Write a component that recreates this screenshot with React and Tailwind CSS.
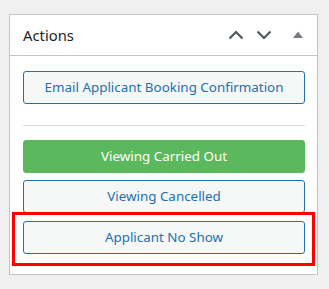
import React from 'react';

const font = { fontFamily: '"Noto Sans", "Open Sans", sans-serif' };

const ActionButton = ({ children, primary, className = '' }) => (
  <button
    className={
      'flex h-[33px] w-full items-center justify-center rounded-[3px] border text-[13.4px] ' +
      (primary
        ? 'border-[#5cb85c] bg-[#5cb85c] text-white '
        : 'border-[#2271b1] bg-[#f6f7f7] text-[#2271b1] ') +
      className
    }
  >
    {children}
  </button>
);

export default function App() {
  return (
    <div className="min-h-screen bg-[#f0f0f1] pl-[9px] pt-[14px]" style={font}>
      <div className="relative w-[309px] border border-[#c3c4c7] bg-white">
        {/* Header */}
        <div className="flex h-[41px] items-center justify-between border-b border-[#c3c4c7] pl-[13px] pr-[14px]">
          <h2 className="text-[14.8px] text-[#1d2327]">Actions</h2>
          <div className="flex items-center">
            <svg width="16" height="12" viewBox="0 0 16 12" className="mr-[12px]">
              <path d="M1.5 9.5 L8 3 L14.5 9.5" fill="none" stroke="#50575e" strokeWidth="2.2" />
            </svg>
            <svg width="16" height="12" viewBox="0 0 16 12" className="mr-[21px]">
              <path d="M1.5 2.5 L8 9 L14.5 2.5" fill="none" stroke="#50575e" strokeWidth="2.2" />
            </svg>
            <svg width="10" height="8" viewBox="0 0 10 8">
              <path d="M0 7 L5 0.5 L10 7 Z" fill="#787c82" />
            </svg>
          </div>
        </div>

        {/* Body */}
        <div className="pl-[13px] pr-[12px] pt-[15px] pb-[20px]">
          <ActionButton>Email Applicant Booking Confirmation</ActionButton>
          <div className="mt-[21px] border-t border-[#dcdcde]" />
          <ActionButton primary className="mt-[14px]">Viewing Carried Out</ActionButton>
          <ActionButton className="mt-[7px]">Viewing Cancelled</ActionButton>
          <ActionButton className="mt-[8px]">Applicant No Show</ActionButton>
        </div>

        {/* highlight annotation */}
        <div className="pointer-events-none absolute left-[2px] top-[197px] h-[54px] w-[303px] border-[3px] border-[#ff0000]" />
      </div>
    </div>
  );
}
